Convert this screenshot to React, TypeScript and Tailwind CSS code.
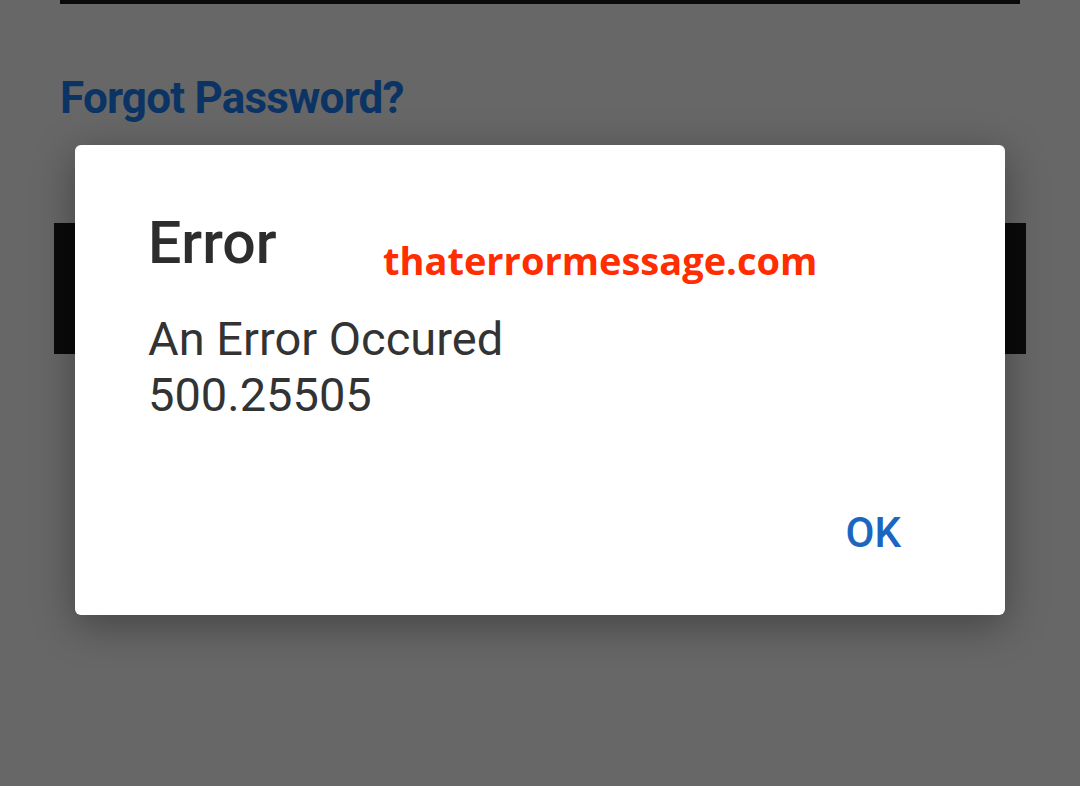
export default function App() {
  return (
    <div className="relative w-[1080px] h-[786px] overflow-hidden bg-[#676767] font-['Roboto',sans-serif]">
      {/* dimmed login page behind the dialog */}
      <div className="flex flex-col">
        <div className="mx-[60px] h-[4px] bg-[#0a0a0a]" />
        <a className="ml-[60px] mt-[72px] text-[44px] leading-[44px] font-bold tracking-[-0.8px] text-[#0b3464]">
          Forgot Password?
        </a>
        <div className="mx-[54px] mt-[103px] h-[131px] bg-[#0a0a0a]" />
      </div>

      {/* modal */}
      <div className="absolute inset-0 flex justify-center pt-[145px]">
        <div className="relative w-[930px] h-[470px] rounded-[6px] bg-white shadow-[0_10px_40px_rgba(0,0,0,0.35)] flex flex-col pl-[73px] pr-[104px] pt-[68px]">
          <h2 className="text-[59px] leading-[59px] font-medium text-[#2d2d2d]">Error</h2>
          <p className="mt-[39px] text-[47px] leading-[56px] text-[#333333]">
            An Error Occured
            <br />
            500.25505
          </p>
          <div className="flex justify-end mt-[89px]">
            <button className="text-[42px] leading-[42px] font-medium text-[#1a66c0]">OK</button>
          </div>
          <span className="absolute left-[308px] top-[96px] font-['Open_Sans',sans-serif] text-[38px] leading-[38px] font-bold text-[#ff2d00]">
            thaterrormessage.com
          </span>
        </div>
      </div>
    </div>
  );
}
